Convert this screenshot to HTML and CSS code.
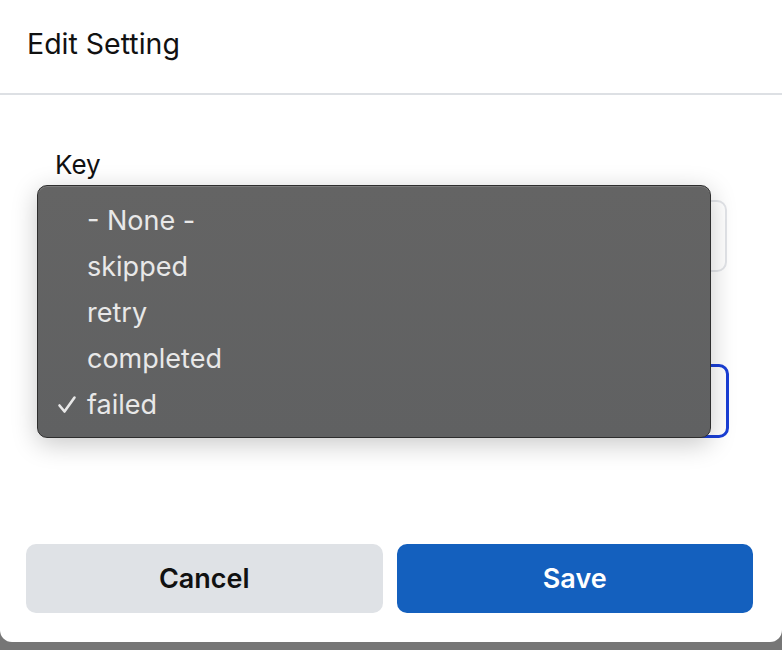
FILE: index.html
```html
<!DOCTYPE html>
<html>
<head>
<meta charset="utf-8">
<link rel="stylesheet" href="styles.css">
</head>
<body>
<div class="dialog">
  <div class="header"><h1 class="title">Edit Setting</h1></div>
  <div class="body">
    <div class="field-label">Key</div>
    <div class="select"></div>
    <div class="select focused"></div>
    <ul class="menu">
      <li class="item">- None -</li>
      <li class="item">skipped</li>
      <li class="item">retry</li>
      <li class="item">completed</li>
      <li class="item checked"><svg class="check" width="20" height="20" viewBox="0 0 20 20"><path d="M2.5 10.5 L7.5 16.5 L17.5 2.5" fill="none" stroke="#e8e8e8" stroke-width="2.6" stroke-linecap="round" stroke-linejoin="round"/></svg>failed</li>
    </ul>
  </div>
  <div class="footer">
    <button class="btn cancel">Cancel</button>
    <button class="btn save">Save</button>
  </div>
</div>
</body>
</html>
```
FILE: styles.css
```css
html, body {
  margin: 0;
  padding: 0;
}
body {
  background: #767676;
  font-family: Inter, "Noto Sans", sans-serif;
  width: 782px;
  height: 650px;
  overflow: hidden;
}
.dialog {
  width: 782px;
  height: 642px;
  background: #fff;
  border-radius: 0 0 12px 12px;
  display: flex;
  flex-direction: column;
  position: relative;
}
.header {
  height: 95px;
  border-bottom: 2px solid #dde0e4;
  display: flex;
  align-items: center;
  padding-left: 27px;
  box-sizing: border-box;
  padding-bottom: 6px;
}
.title {
  margin: 0;
  font-size: 28.5px;
  font-weight: 400;
  color: #111;
  line-height: 32px;
}
.body {
  padding: 54px 55px 0 55px;
  position: relative;
}
.field-label {
  font-size: 26px;
  line-height: 32px;
  color: #111;
  margin-bottom: 19px;
}
.select {
  height: 68px;
  border: 2px solid #e3e5e9;
  border-radius: 10px;
  background: #fff;
}
.select.focused {
  margin-top: 92px;
  height: 68px;
  border: 3px solid #1a3fd6;
  margin-right: -2px;
}
.menu {
  position: absolute;
  left: 37px;
  top: 90px;
  width: 674px;
  height: 253px;
  margin: 0;
  padding: 12px 0 0 0;
  box-sizing: border-box;
  list-style: none;
  background: linear-gradient(180deg, #646464 0%, #606162 100%);
  border: 1px solid #2e2e2e;
  border-radius: 10px;
  box-shadow: inset 0 1px 0 #7c7c7c, 0 6px 26px rgba(0,0,0,0.22);
}
.item {
  height: 46px;
  line-height: 46px;
  font-size: 27px;
  color: #e8e8e8;
  padding-left: 49px;
  position: relative;
}
.check {
  position: absolute;
  left: 19px;
  top: 13px;
}
.footer {
  margin-top: auto;
  display: flex;
  gap: 14px;
  padding: 0 29px 29px 26px;
}
.btn {
  flex: 1;
  height: 69px;
  border: none;
  border-radius: 10px;
  font-family: Inter, "Noto Sans", sans-serif;
  font-size: 27px;
  font-weight: 600;
}
.cancel {
  background: #dfe2e6;
  color: #111;
}
.save {
  background: #1460be;
  color: #fff;
}
```
